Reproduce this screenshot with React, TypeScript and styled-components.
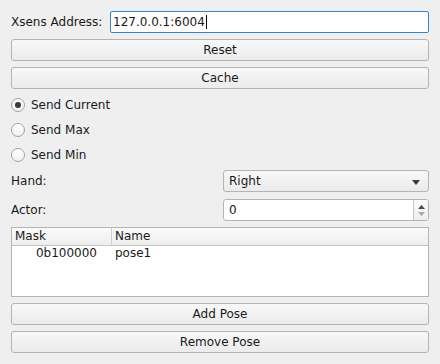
import styled, { createGlobalStyle } from "styled-components";

const Global = createGlobalStyle`
  body {
    margin: 0;
    background: #efefef;
    font-family: "DejaVu Sans", "Liberation Sans", sans-serif;
    font-size: 12px;
    color: #1a1a1a;
  }
`;

const poses = [{ mask: "0b100000", name: "pose1" }];

export default function App() {
  return (
    <>
      <Global />
      <Panel>
        <AddressRow>
          <Label>Xsens Address:</Label>
          <LineEdit>
            127.0.0.1:6004
            <Caret />
          </LineEdit>
        </AddressRow>
        <Button>Reset</Button>
        <Button>Cache</Button>
        <Radio checked label="Send Current" />
        <Radio label="Send Max" />
        <Radio label="Send Min" />
        <FormRow>
          <Label>Hand:</Label>
          <Field>
            Right
            <ComboArrow viewBox="0 0 8 5">
              <path d="M0 0h8L4 5z" fill="#3a3a3a" />
            </ComboArrow>
          </Field>
        </FormRow>
        <FormRow $shift={1}>
          <Label>Actor:</Label>
          <SpinBox>
            <SpinText>0</SpinText>
            <SpinButtons>
              <svg width="7" height="4" viewBox="0 0 7 4">
                <path d="M0 4h7L3.5 0z" fill="#4a4a4a" />
              </svg>
              <svg width="7" height="4" viewBox="0 0 7 4">
                <path d="M0 0h7L3.5 4z" fill="#a8a8a8" />
              </svg>
            </SpinButtons>
          </SpinBox>
        </FormRow>
        <Table>
          <HeaderRow>
            <HeaderCell>Mask</HeaderCell>
            <HeaderCell $last>Name</HeaderCell>
          </HeaderRow>
          {poses.map((p) => (
            <Row key={p.name}>
              <MaskCell>{p.mask}</MaskCell>
              <NameCell>{p.name}</NameCell>
            </Row>
          ))}
        </Table>
        <Button>Add Pose</Button>
        <Button>Remove Pose</Button>
      </Panel>
    </>
  );
}

const Radio = ({ label, checked }: { label: string; checked?: boolean }) => (
  <RadioRow>
    <RadioCircle>{checked && <RadioDot />}</RadioCircle>
    {label}
  </RadioRow>
);

const Panel = styled.div`
  display: flex;
  flex-direction: column;
  gap: 6px;
  padding: 11px;
  width: 418px;
`;

const AddressRow = styled.div`
  display: flex;
  align-items: center;
  height: 22px;
  & > span {
    width: 99px;
    flex: none;
  }
`;

const Label = styled.span`
  line-height: 22px;
`;

const LineEdit = styled.div`
  flex: 1;
  height: 22px;
  box-sizing: border-box;
  border: 1px solid #3a84c4;
  border-radius: 2px;
  background: #fff;
  padding-left: 2px;
  line-height: 20px;
  display: flex;
  align-items: center;
`;

const Caret = styled.span`
  display: inline-block;
  width: 1px;
  height: 14px;
  background: #000;
  margin-left: 1px;
`;

const Button = styled.div`
  height: 22px;
  box-sizing: border-box;
  border: 1px solid #b4b4b4;
  border-radius: 3px;
  background: linear-gradient(#f8f8f8, #ebebeb);
  text-align: center;
  line-height: 20px;
`;

const RadioRow = styled.div`
  display: flex;
  align-items: center;
  height: 19px;
  gap: 6px;
`;

const RadioCircle = styled.span`
  width: 14px;
  height: 14px;
  box-sizing: border-box;
  border-radius: 50%;
  border: 1px solid #a2a2a2;
  background: linear-gradient(#ffffff, #f0f0f0);
  display: flex;
  align-items: center;
  justify-content: center;
`;

const RadioDot = styled.span`
  width: 6px;
  height: 6px;
  border-radius: 50%;
  background: #3a3a3a;
`;

const FormRow = styled.div<{ $shift?: number }>`
  display: grid;
  grid-template-columns: 1fr 1fr;
  column-gap: 6px;
  height: 22px;
  margin-top: ${({ $shift }) => $shift ?? 0}px;
`;

const Field = styled.div`
  position: relative;
  box-sizing: border-box;
  height: 22px;
  border: 1px solid #b4b4b4;
  border-radius: 3px;
  background: linear-gradient(#f8f8f8, #ebebeb);
  padding-left: 5px;
  line-height: 20px;
`;

const ComboArrow = styled.svg`
  position: absolute;
  right: 8px;
  top: 9px;
  width: 8px;
  height: 5px;
`;

const SpinBox = styled.div`
  box-sizing: border-box;
  height: 22px;
  border: 1px solid #b4b4b4;
  border-radius: 3px;
  background: #fff;
  display: flex;
`;

const SpinText = styled.div`
  flex: 1;
  padding-left: 5px;
  line-height: 20px;
`;

const SpinButtons = styled.div`
  width: 14px;
  border-left: 1px solid #c4c4c4;
  background: linear-gradient(#fbfbfb, #ededed);
  display: flex;
  flex-direction: column;
  align-items: center;
  justify-content: center;
  gap: 3px;
  border-radius: 0 2px 2px 0;
`;

const Table = styled.div`
  height: 70px;
  box-sizing: border-box;
  border: 1px solid #b4b4b4;
  background: #fff;
`;

const HeaderRow = styled.div`
  display: grid;
  grid-template-columns: 100px 1fr;
  height: 17px;
  border-bottom: 1px solid #c4c4c4;
  background: linear-gradient(#fafafa, #eeeeee);
`;

const HeaderCell = styled.div<{ $last?: boolean }>`
  padding-left: 3px;
  line-height: 17px;
  border-right: ${({ $last }) => ($last ? "none" : "1px solid #d0d0d0")};
`;

const Row = styled.div`
  display: grid;
  grid-template-columns: 100px 1fr;
  height: 15px;
  line-height: 14px;
`;

const MaskCell = styled.div`
  text-align: right;
  padding-right: 15px;
`;

const NameCell = styled.div`
  padding-left: 3px;
`;
